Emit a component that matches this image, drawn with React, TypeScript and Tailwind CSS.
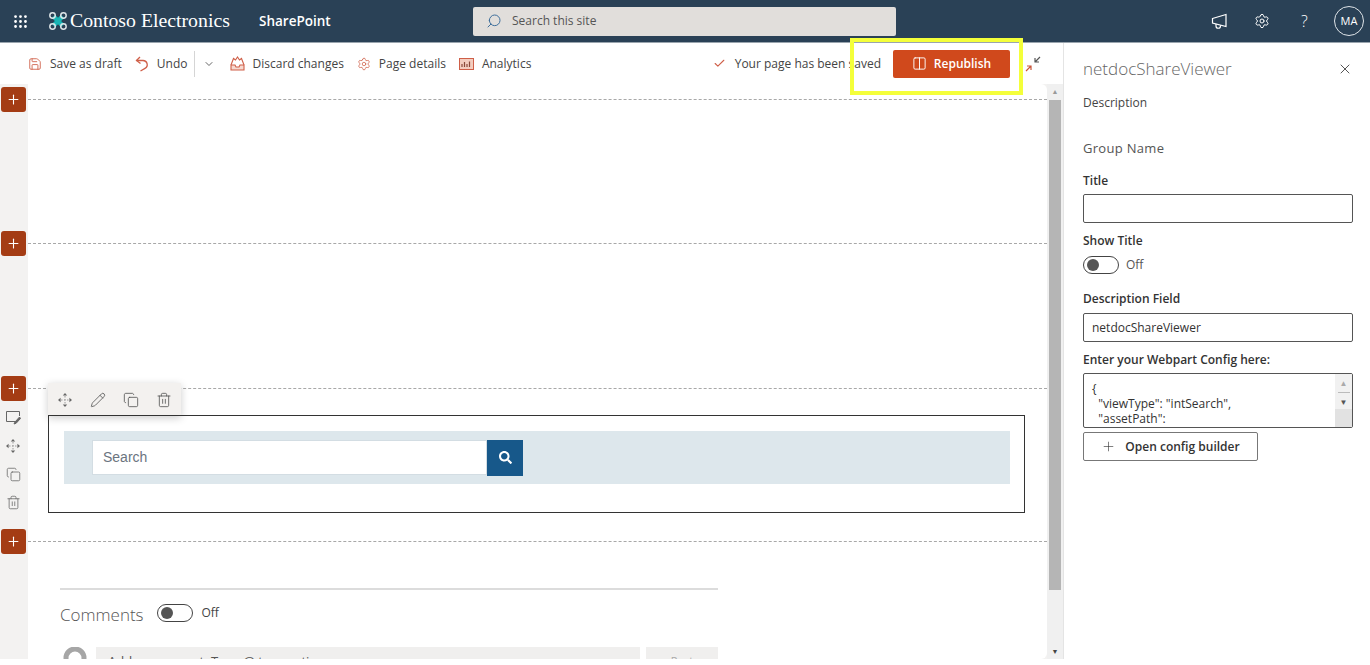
import React from "react";
import {
  Grip,
  Search,
  Settings,
  Plus,
  Save,
  ChevronDown,
  Check,
  Columns2,
  X,
  Pencil,
  Copy,
  Trash2,
} from "lucide-react";
import { FaSearch } from "react-icons/fa";

const AddButton = () => (
  <button className="w-[25px] h-[25px] rounded-[3px] bg-[#a43c14] flex items-center justify-center text-white shrink-0">
    <Plus size={15} strokeWidth={1.75} />
  </button>
);

const Dashed = ({ height }: { height: string }) => (
  <div className={`border-t border-dashed border-[#a8a8a8] ${height}`} />
);

const Toggle = () => (
  <div className="w-[36px] h-[18px] rounded-full border border-[#444] flex items-center pl-[3px]">
    <div className="w-[12px] h-[12px] rounded-full bg-[#555]" />
  </div>
);

const MoveIcon = () => (
  <svg width="16" height="16" viewBox="0 0 16 16" fill="#666">
    <path d="M8 1 L10.2 3.6 H5.8 Z M8 15 L5.8 12.4 H10.2 Z M1 8 L3.6 5.8 V10.2 Z M15 8 L12.4 10.2 V5.8 Z" />
    <path d="M8 4 V12 M4 8 H12" stroke="#9a9a9a" strokeWidth="1" strokeDasharray="1.5 1.5" />
  </svg>
);

const EditBoxIcon = () => (
  <svg width="16" height="16" viewBox="0 0 16 16" fill="none" stroke="#666" strokeWidth="1">
    <path d="M10 12.5 H1.5 V2.5 H14.5 V7" />
    <path d="M14.5 8 L10 13 L9 15 L11.2 14.2 L15.5 9.5 Z" fill="#666" />
  </svg>
);

const ToolItem = ({ icon, label, className }: { icon: React.ReactNode; label: string; className: string }) => (
  <div className={`flex items-center gap-[8px] text-[12px] text-[#444] ${className}`}>
    {icon}
    <span>{label}</span>
  </div>
);

export default function App() {
  return (
    <div className="h-[659px] flex flex-col overflow-hidden font-['Open_Sans',sans-serif] bg-white">
      {/* suite bar */}
      <header className="h-[43px] shrink-0 bg-[#2a4156] flex items-center text-white border-b border-[#9aa5ae]">
        <Grip size={17} className="ml-[12px]" />
        <svg width="20" height="22" viewBox="0 0 22 22" className="ml-[19px] mr-[2px]" fill="none">
          <path d="M6 6 L16 16 M16 6 L6 16" stroke="#19b5b5" strokeWidth="5" />
          <circle cx="5" cy="5" r="3" stroke="#dfe7ea" strokeWidth="1.6" />
          <circle cx="17" cy="5" r="3" stroke="#dfe7ea" strokeWidth="1.6" />
          <circle cx="5" cy="17" r="3" stroke="#dfe7ea" strokeWidth="1.6" />
          <circle cx="17" cy="17" r="3" stroke="#dfe7ea" strokeWidth="1.6" />
        </svg>
        <span className="font-['Liberation_Serif',serif] text-[19.8px] w-[158px] whitespace-nowrap">Contoso Electronics</span>
        <span className="ml-[31px] font-semibold text-[13.5px] w-[214px] whitespace-nowrap">SharePoint</span>
        <div className="w-[423px] h-[29px] bg-[#e1dedb] rounded-[2px] flex items-center pl-[13px] gap-[10px] text-[12px] text-[#555]">
          <Search size={16} className="text-[#3f6f9c] -scale-x-100" strokeWidth={1.5} />
          Search this site
        </div>
        <div className="ml-auto flex items-center">
          <svg width="17" height="16" viewBox="0 0 17 16" fill="none" stroke="white" strokeWidth="1.2">
            <path d="M1.5 5.5 L15 1.5 V13.5 L1.5 10 Z" />
            <path d="M5 11 V13 A2.2 2.2 0 0 0 9.5 13 V12.2" />
          </svg>
          <Settings size={16} strokeWidth={1.5} className="ml-[26px]" />
          <span className="ml-[31px] text-[16px] font-light w-[8px]">?</span>
          <div className="ml-[25px] mr-[6px] w-[30px] h-[30px] rounded-full border border-[#dfe4e8] flex items-center justify-center text-[11px]">
            MA
          </div>
        </div>
      </header>

      <div className="flex-1 flex min-h-0">
        <div className="w-[1064px] flex flex-col border-r border-[#e4e4e4]">
          {/* command bar */}
          <div className="h-[41px] shrink-0 flex items-center bg-white relative">
            <ToolItem className="ml-[28px]" label="Save as draft" icon={<Save size={14} strokeWidth={1.5} className="text-[#cf5f48]" />} />
            <ToolItem
              className="ml-[13px]"
              label="Undo"
              icon={
                <svg width="14" height="16" viewBox="0 0 14 16" fill="none" stroke="#cf5f48" strokeWidth="1.3">
                  <path d="M1.5 4.5 H8 A4.2 4.2 0 0 1 10 12.4 L5.5 15" />
                  <path d="M5 1 L1.5 4.5 L5.5 7.5" />
                </svg>
              }
            />
            <div className="ml-[6px] w-px h-[26px] bg-[#d5d5d5]" />
            <ChevronDown size={12} className="ml-[8px] text-[#666]" />
            <ToolItem
              className="ml-[15px]"
              label="Discard changes"
              icon={
                <svg width="15" height="15" viewBox="0 0 15 15" fill="none" stroke="#cf5f48" strokeWidth="1.1">
                  <path d="M1 9 L3.5 2.5 L5.5 4 L7.5 1 L9.5 4 L11.5 2.5 L14 9" />
                  <path d="M1 9 H5 L6 11 H9 L10 9 H14 V14 H1 Z" fill="#f6d9d0" />
                </svg>
              }
            />
            <ToolItem className="ml-[13px]" label="Page details" icon={<Settings size={14} strokeWidth={1.3} className="text-[#cf5f48]" />} />
            <ToolItem
              className="ml-[13px]"
              label="Analytics"
              icon={
                <svg width="15" height="12" viewBox="0 0 15 12">
                  <rect x="0.5" y="0.5" width="14" height="11" fill="#f3cdbf" stroke="#cf5f48" />
                  <path d="M3 9 V6 M5.5 9 V4 M8 9 V6 M10.5 9 V3.5" stroke="#8a4a3a" strokeWidth="1.2" />
                </svg>
              }
            />
            <div className="ml-auto flex items-center text-[12px] text-[#444]">
              <Check size={13} className="text-[#cf5f48] mr-[9px]" />
              Your page has been saved
            </div>
            <button className="ml-[12px] w-[117px] h-[28px] bg-[#d0491c] rounded-[2px] text-white text-[12px] font-semibold flex items-center justify-center gap-[7px]">
              <Columns2 size={15} strokeWidth={1.5} />
              Republish
            </button>
            <svg width="18" height="18" viewBox="0 0 18 18" className="ml-[14px] mr-[21px]" fill="none" strokeWidth="1.2">
              <path d="M16 2 L11 7 M11 3 V7 H15" stroke="#555" />
              <path d="M2 16 L7 11 M3 11 H7 V15" stroke="#c8553a" />
            </svg>
            {/* highlight drawn on top of the screenshot */}
            <div className="absolute z-10 left-[850px] top-[-5px] w-[173px] h-[57px] border-[4px] border-[#f4ff3a]" />
          </div>

          <div className="flex-1 flex min-h-0 bg-[#f3f2f1]">
            {/* left rail */}
            <div className="w-[28px] shrink-0 flex flex-col items-center pt-[3px] pr-[2px]">
              <AddButton />
              <div className="h-[119px]" />
              <AddButton />
              <div className="h-[120px]" />
              <AddButton />
              <div className="flex flex-col items-center gap-[13px] mt-[8px] mb-[19px] text-[#666]">
                <EditBoxIcon />
                <MoveIcon />
                <Copy size={15} strokeWidth={1.25} />
                <Trash2 size={15} strokeWidth={1.25} />
              </div>
              <AddButton />
            </div>

            {/* page canvas */}
            <div className="flex-1 bg-white rounded-tr-[6px] rounded-br-[6px] overflow-hidden pt-[15px] relative">
              <Dashed height="h-[144px]" />
              <Dashed height="h-[145px]" />
              <Dashed height="h-[153px]" />
              <div className="border-t border-dashed border-[#a8a8a8] pl-[32px] pt-[46px]">
                <div className="w-[658px] border-t-2 border-[#dcdcdc]" />
                <div className="flex items-center mt-[12px]">
                  <span className="text-[17px] text-[#555] font-light">Comments</span>
                  <div className="ml-[13px] mb-[3px]"><Toggle /></div>
                  <span className="ml-[9px] mb-[3px] text-[12px] text-[#444]">Off</span>
                </div>
                <div className="flex items-start mt-[19px] w-[658px]">
                  <svg width="30" height="30" viewBox="0 0 30 30" className="shrink-0">
                    <circle cx="15" cy="11" r="9" fill="none" stroke="#a6a6a6" strokeWidth="5" />
                  </svg>
                  <div className="ml-[6px] w-[544px] h-[30px] bg-[#f0efee] pl-[12px] pt-[5px] text-[13px] text-[#555]">
                    Add a comment. Type @ to mention
                  </div>
                  <div className="ml-[6px] w-[72px] h-[30px] bg-[#f0efee] text-center pt-[6px] text-[11px] text-[#aaa]">Post</div>
                </div>
              </div>

              {/* web part toolbar floats over the section line */}
              <div className="absolute left-[20px] top-[299px] w-[133px] h-[33px] bg-[#f3f1ef] shadow-[0_2px_8px_rgba(0,0,0,0.2)] flex items-center gap-[17px] pl-[9px] text-[#555]">
                <MoveIcon />
                <Pencil size={16} strokeWidth={1.25} />
                <Copy size={16} strokeWidth={1.25} />
                <Trash2 size={16} strokeWidth={1.25} />
              </div>
              {/* selected web part */}
              <div className="absolute left-[20px] top-[331px] w-[977px] h-[98px] border border-[#333] pl-[15px] pr-[14px] pt-[15px]">
                <div className="h-[53px] bg-[#dde7ec] flex items-center pl-[28px]">
                  <div className="w-[395px] h-[35px] bg-white border border-[#d3dde3] flex items-center pl-[10px] text-[14px] text-[#6b7480] font-['Liberation_Sans',sans-serif]">
                    Search
                  </div>
                  <div className="w-[36px] h-[36px] bg-[#17588a] flex items-center justify-center text-white">
                    <FaSearch size={13} />
                  </div>
                </div>
              </div>
            </div>

            {/* scrollbar */}
            <div className="w-[16px] shrink-0 bg-[#f0f0f0] flex flex-col items-center">
              <div className="h-[16px] text-[7px] text-[#999] leading-[16px]">▲</div>
              <div className="w-[12px] h-[490px] bg-[#b5b5b5]" />
              <div className="mt-auto h-[14px] text-[7px] text-[#444] leading-[14px]">▼</div>
            </div>
          </div>
        </div>

        {/* property pane */}
        <aside className="flex-1 pl-[19px] pr-[17px] bg-white text-[#333]">
          <div className="flex items-center justify-between pt-[13px]">
            <span className="text-[17px] text-[#666] font-light">netdocShareViewer</span>
            <X size={16} className="text-[#555]" strokeWidth={1.5} />
          </div>
          <div className="text-[12px] mt-[12px] text-[#444]">Description</div>
          <div className="text-[13px] mt-[27px] text-[#555] tracking-[0.3px]">Group Name</div>
          <div className="text-[12px] font-semibold mt-[14px]">Title</div>
          <div className="h-[29px] mt-[4px] border border-[#555] rounded-[2px]" />
          <div className="text-[12px] font-semibold mt-[9px]">Show Title</div>
          <div className="flex items-center mt-[6px]">
            <Toggle />
            <span className="ml-[7px] text-[12px] text-[#555]">Off</span>
          </div>
          <div className="text-[12px] font-semibold mt-[16px]">Description Field</div>
          <div className="h-[29px] mt-[5px] border border-[#555] rounded-[2px] flex items-center pl-[8px] text-[12px]">netdocShareViewer</div>
          <div className="text-[12px] font-semibold mt-[9px]">Enter your Webpart Config here:</div>
          <div className="h-[55px] mt-[4px] border border-[#555] rounded-[2px] flex overflow-hidden">
            <div className="flex-1 pl-[8px] pt-[7px] text-[12px] leading-[15px] whitespace-pre">
              {'{\n  "viewType": "intSearch",\n  "assetPath":'}
            </div>
            <div className="w-[17px] bg-[#f1f1f1] flex flex-col items-center text-[8px] leading-[12px] text-[#555]">
              <span className="mt-[3px] text-[#aaa]">▲</span>
              <span className="w-[12px] h-px bg-[#bbb] my-[3px]" />
              <span>▼</span>
              <span className="mt-auto w-full h-[18px] bg-[#e2e2e2]" />
            </div>
          </div>
          <button className="mt-[4px] w-[175px] h-[29px] border border-[#777] rounded-[2px] flex items-center justify-center gap-[9px] text-[12px] font-semibold">
            <Plus size={15} strokeWidth={1} />
            Open config builder
          </button>
        </aside>
      </div>
    </div>
  );
}
